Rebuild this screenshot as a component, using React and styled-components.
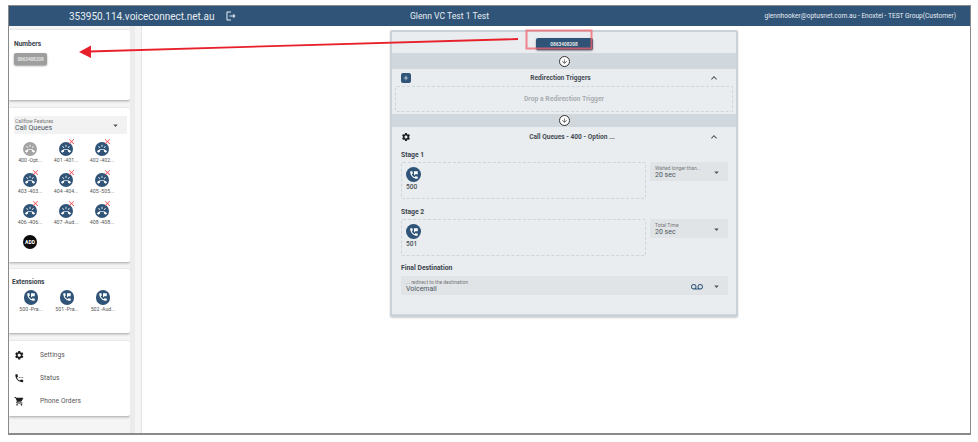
import React from 'react';
import styled, { createGlobalStyle } from 'styled-components';
import { MdRingVolume, MdPermPhoneMsg, MdSettings, MdSettingsPhone, MdShoppingCart, MdExpandLess, MdArrowDropDown, MdArrowDownward, MdVoicemail, MdAdd, MdClose, MdOutlineLogout } from 'react-icons/md';

const queues = ['400 -Opt...', '401 -401...', '402 -402...', '403 -403...', '404 -404...', '405 -505...', '406 -406...', '407 -Aud...', '408 -408...'];
const extensions = ['500 -Pra...', '501 -Pra...', '502 -Aud...'];

const Global = createGlobalStyle`
  html, body { margin: 0; padding: 0; background: #fff; height: 442px; overflow: hidden; }
  body { font-family: Roboto, "Liberation Sans", sans-serif; color: #333; }
`;

const Frame = styled.div`
  position: relative;
  box-sizing: border-box;
  width: 963px;
  height: 430px;
  margin: 5px 0 0 8px;
  border: 1px solid #8a8a8a;
  border-width: 1px 1px 2px 1px;
  display: flex;
  flex-direction: column;
  overflow: hidden;
`;

const Header = styled.header`
  height: 20px;
  flex: none;
  background: #2f5478;
  color: #e8edf2;
  display: grid;
  grid-template-columns: 60px 146px 24px 1fr;
  align-items: center;
`;

const Host = styled.div`
  grid-column: 2;
  font-size: 10px;
  white-space: nowrap;
`;

const ExitIcon = styled(MdOutlineLogout)`
  grid-column: 3;
  margin-left: 10px;
  font-size: 12px;
`;

const HeaderRest = styled.div`
  grid-column: 4;
  display: flex;
  justify-content: space-between;
  align-items: center;
  padding: 0 14px 0 171px;
`;

const Title = styled.div`
  font-size: 8.6px;
  white-space: nowrap;
`;

const Account = styled.div`
  font-size: 6.6px;
  white-space: nowrap;
`;

const Body = styled.div`
  flex: 1;
  display: flex;
  min-height: 0;
`;

const Sidebar = styled.aside`
  width: 133px;
  flex: none;
  display: flex;
  background: #f5f5f5;
  border-right: 1px solid #e4e4e4;
  box-sizing: border-box;
`;

const CardColumn = styled.div`
  width: 121px;
  flex: none;
  padding-top: 4px;
  display: flex;
  flex-direction: column;
  gap: 7.5px;
`;

const Rail = styled.div`
  width: 5px;
  flex: none;
  background: #ececec;
`;

const Card = styled.section`
  box-sizing: border-box;
  height: ${p => p.$h}px;
  background: #fff;
  border-radius: 0 2px 2px 0;
  box-shadow: 0 1px 3px rgba(0, 0, 0, 0.35);
  padding: ${p => p.$pad || '0'};
`;

const CardTitle = styled.div`
  font-size: 6.6px;
  font-weight: 700;
  color: #37404a;
`;

const Chip = styled.div`
  width: 33px;
  height: 12px;
  margin-top: 5px;
  border-radius: 2px;
  background: #9e9e9e;
  box-shadow: 0 1px 2px rgba(0, 0, 0, 0.4);
  color: #eee;
  font-size: 4.6px;
  font-weight: 500;
  display: flex;
  align-items: center;
  justify-content: center;
`;

const Select = styled.div`
  box-sizing: border-box;
  height: 19px;
  background: ${p => p.$bg || '#e0e4e7'};
  padding: 2px 6px 0 5px;
  display: flex;
  align-items: center;
  gap: 8px;
`;

const TimeSelect = styled(Select)`
  width: 78px;
  flex: none;
`;

const FeatureSelect = styled(Select)`
  height: 18px;
  margin: 8px 3px 0 5px;
  padding-left: 1px;
`;

const SelectText = styled.div`
  flex: 1;
  min-width: 0;
`;

const SelectLabel = styled.div`
  font-size: 5px;
  line-height: 5px;
  color: #777;
  white-space: nowrap;
`;

const SelectValue = styled.div`
  font-size: 7px;
  line-height: 9px;
  color: #4a5660;
`;

const Caret = styled(MdArrowDropDown)`
  font-size: 11px;
  color: #555;
  flex: none;
`;

const IconGrid = styled.div`
  display: grid;
  grid-template-columns: repeat(3, 36px);
  grid-auto-rows: 31px;
  margin: ${p => p.$margin};
`;

const Tile = styled.div`
  position: relative;
  display: flex;
  flex-direction: column;
  align-items: center;
  font-size: 5.2px;
  color: #555;
  white-space: nowrap;
`;

const Disc = styled.div`
  position: relative;
  width: ${p => p.$size || 14.5}px;
  height: ${p => p.$size || 14.5}px;
  border-radius: 50%;
  background: ${p => p.$bg || '#2f5478'};
  color: #fff;
  display: flex;
  align-items: center;
  justify-content: center;
  font-size: 10px;
  flex: none;
  margin-bottom: 1px;
`;

const AddLabel = styled.span`
  font-size: 5px;
  font-weight: 700;
`;

const Remove = styled(MdClose)`
  position: absolute;
  top: -4.5px;
  right: -3px;
  font-size: 9px;
  color: #f0525c;
`;

const MenuRow = styled.div`
  height: 23px;
  display: grid;
  grid-template-columns: 31px 1fr;
  align-items: center;
  font-size: 6.6px;
  color: #555;
  letter-spacing: 0.1px;
  svg {
    font-size: 10.5px;
    color: #1d1d1d;
    justify-self: end;
    margin-right: 16px;
  }
`;

const Canvas = styled.main`
  flex: 1;
  display: flex;
  justify-content: flex-start;
  padding: 4px 0 0 248px;
  background: #fff;
`;

const Panel = styled.div`
  box-sizing: border-box;
  width: 348px;
  height: 287px;
  border: 2.5px solid #c9d2d8;
  border-radius: 2px;
  background: #d0d7dd;
  display: flex;
  flex-direction: column;
  box-shadow: 0 1px 2px rgba(0, 0, 0, 0.2);
`;

const Section = styled.div`
  background: #e9edf0;
  box-sizing: border-box;
  flex: ${p => (p.$grow ? 1 : 'none')};
  height: ${p => (p.$h ? `${p.$h}px` : 'auto')};
  padding: ${p => p.$pad || '0'};
  margin-bottom: ${p => (p.$last ? '1px' : '0')};
`;

const TopSection = styled(Section)`
  display: flex;
  justify-content: center;
  align-items: flex-start;
  padding-top: 6px;
`;

const NumberButton = styled.div`
  width: 57px;
  height: 12px;
  border-radius: 2px;
  background: #2f5478;
  box-shadow: 0 1px 2px rgba(0, 0, 0, 0.4);
  color: #e6e6e6;
  font-size: 4.8px;
  font-weight: 700;
  display: flex;
  align-items: center;
  justify-content: center;
`;

const Band = styled.div`
  height: ${p => p.$h}px;
  flex: none;
  display: flex;
  align-items: center;
  justify-content: center;
`;

const DownCircle = styled.div`
  width: 9px;
  height: 9px;
  border-radius: 50%;
  border: 1px solid #333;
  background: #fff;
  color: #333;
  font-size: 7px;
  display: flex;
  align-items: center;
  justify-content: center;
`;

const SectionHead = styled.div`
  display: grid;
  grid-template-columns: ${p => p.$cols};
  align-items: center;
  height: ${p => p.$h}px;
  padding-left: ${p => p.$left}px;
  margin-bottom: ${p => p.$after || 0}px;
  font-size: 6.6px;
  font-weight: 700;
  color: #454c54;
  text-align: center;
`;

const PlusBox = styled.div`
  width: 10px;
  height: 10px;
  border-radius: 2px;
  background: #2f5478;
  color: #fff;
  font-size: 8px;
  display: flex;
  align-items: center;
  justify-content: center;
`;

const Chevron = styled(MdExpandLess)`
  font-size: 12px;
  color: #555;
  margin-left: ${p => p.$left}px;
`;

const DropZone = styled.div`
  box-sizing: border-box;
  height: ${p => p.$h}px;
  margin: ${p => p.$margin || '0'};
  border: 1px dashed #ced4d9;
  border-radius: 2px;
  flex: ${p => (p.$grow ? 1 : 'none')};
  display: flex;
  flex-direction: ${p => (p.$col ? 'column' : 'row')};
  align-items: ${p => (p.$col ? 'flex-start' : 'center')};
  justify-content: ${p => (p.$col ? 'flex-start' : 'center')};
  padding: ${p => p.$pad || '0'};
  font-size: 6.8px;
  font-weight: 700;
  color: #a9adb1;
`;

const StageTitle = styled.div`
  font-size: 6.8px;
  font-weight: 700;
  color: #3c444c;
  line-height: 8px;
  margin-bottom: ${p => p.$gap}px;
`;

const StageRow = styled.div`
  display: flex;
  gap: 4px;
  align-items: flex-start;
  margin-bottom: ${p => p.$gap}px;
`;

const StageName = styled.div`
  font-size: 6.6px;
  font-weight: 500;
  color: #4a5058;
`;

const Voicemail = styled(MdVoicemail)`
  font-size: 12px;
  color: #2f5478;
  flex: none;
`;

const GearIcon = styled(MdSettings)`
  font-size: 10px;
  color: #1d1d1d;
`;

const Markup = styled.svg`
  position: absolute;
  left: -8px;
  top: -5px;
  width: 978px;
  height: 442px;
  pointer-events: none;
`;

const QueueTile = ({ name, index }) => (
  <Tile>
    <Disc $bg={index === 0 ? '#a3a3a3' : undefined}>
      <MdRingVolume />
      {index > 0 && <Remove />}
    </Disc>
    {name}
  </Tile>
);

const StageBlock = ({ title, name, label, gap }) => (
  <>
    <StageTitle $gap={3}>{title}</StageTitle>
    <StageRow $gap={gap}>
      <DropZone $grow $col $h={37} $pad="4px 4px">
        <Disc $size={15}><MdPermPhoneMsg /></Disc>
        <StageName>{name}</StageName>
      </DropZone>
      <TimeSelect>
        <SelectText>
          <SelectLabel>{label}</SelectLabel>
          <SelectValue>20 sec</SelectValue>
        </SelectText>
        <Caret />
      </TimeSelect>
    </StageRow>
  </>
);

const App = () => {
  return (
    <>
      <Global />
      <Frame>
        <Header>
          <Host>353950.114.voiceconnect.net.au</Host>
          <ExitIcon />
          <HeaderRest>
            <Title>Glenn VC Test 1 Test</Title>
            <Account>glennhooker@optusnet.com.au - Enoxtel - TEST Group(Customer)</Account>
          </HeaderRest>
        </Header>
        <Body>
          <Sidebar>
            <CardColumn>
              <Card $h={70} $pad="10px 0 0 5px">
                <CardTitle>Numbers</CardTitle>
                <Chip>0863408208</Chip>
              </Card>
              <Card $h={154}>
                <FeatureSelect $bg="#f2f2f2">
                  <SelectText>
                    <SelectLabel>Callflow Features</SelectLabel>
                    <SelectValue>Call Queues</SelectValue>
                  </SelectText>
                  <Caret />
                </FeatureSelect>
                <IconGrid $margin="8px 0 0 3px">
                  {queues.map((q, i) => <QueueTile key={q} name={q} index={i} />)}
                  <Tile><Disc $bg="#0b0b0b"><AddLabel>ADD</AddLabel></Disc></Tile>
                </IconGrid>
              </Card>
              <Card $h={64} $pad="9px 0 0 3px">
                <CardTitle>Extensions</CardTitle>
                <IconGrid $margin="4px 0 0 1px">
                  {extensions.map(e => (
                    <Tile key={e}><Disc><MdPermPhoneMsg /></Disc>{e}</Tile>
                  ))}
                </IconGrid>
              </Card>
              <Card $h={75} $pad="3px 0 0 0">
                <MenuRow><MdSettings /><span>Settings</span></MenuRow>
                <MenuRow><MdSettingsPhone /><span>Status</span></MenuRow>
                <MenuRow><MdShoppingCart /><span>Phone Orders</span></MenuRow>
              </Card>
            </CardColumn>
            <Rail />
          </Sidebar>
          <Canvas>
            <Panel>
              <TopSection $h={21}>
                <NumberButton>0863408208</NumberButton>
              </TopSection>
              <Band $h={16}><DownCircle><MdArrowDownward /></DownCircle></Band>
              <Section $h={45}>
                <SectionHead $h={17} $left={9} $cols="22px 1fr 38px">
                  <PlusBox><MdAdd /></PlusBox>
                  <span>Redirection Triggers</span>
                  <Chevron $left={10} />
                </SectionHead>
                <DropZone $h={26} $margin="0 3px 0 3px">Drop a Redirection Trigger</DropZone>
              </Section>
              <Band $h={13}><DownCircle><MdArrowDownward /></DownCircle></Band>
              <Section $grow $last $pad="0 8px 0 9px">
                <SectionHead $h={20} $left={0} $after={4} $cols="37px 1fr 22px">
                  <GearIcon />
                  <span>Call Queues - 400 - Option ...</span>
                  <Chevron $left={2} />
                </SectionHead>
                <StageBlock title="Stage 1" name="500" label="Waited longer than..." gap={9} />
                <StageBlock title="Stage 2" name="501" label="Total Time" gap={8} />
                <StageTitle $gap={4}>Final Destination</StageTitle>
                <Select>
                  <SelectText>
                    <SelectLabel>... redirect to the destination</SelectLabel>
                    <SelectValue>Voicemail</SelectValue>
                  </SelectText>
                  <Voicemail />
                  <Caret />
                </Select>
              </Section>
            </Panel>
          </Canvas>
        </Body>
        <Markup viewBox="0 0 978 442">
          <rect x="525.5" y="29.5" width="65" height="18" fill="none" stroke="#f4606a" strokeWidth="2" opacity="0.75" />
          <line x1="517" y1="38" x2="88" y2="50.5" stroke="#e8202a" strokeWidth="1.8" />
          <polygon points="78,51 90,44.5 90,57" fill="#e8202a" />
        </Markup>
      </Frame>
    </>
  );
};

export default App;
